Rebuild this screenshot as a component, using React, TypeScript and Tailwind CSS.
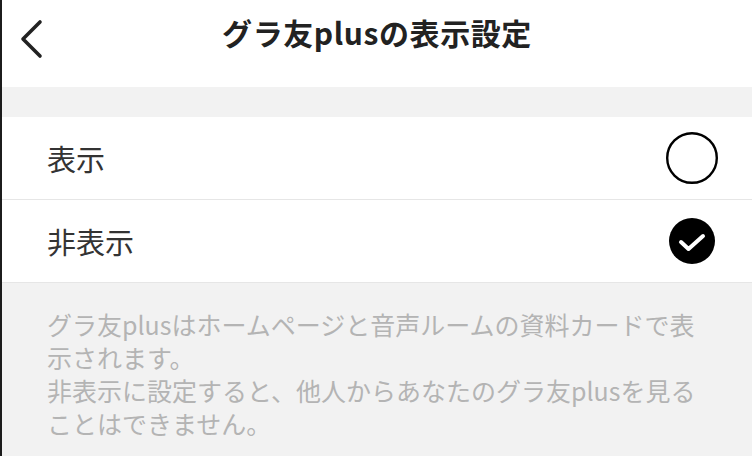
import React from "react";

const jp = { fontFamily: '"Noto Sans CJK JP", "Noto Sans", sans-serif' };

const BackIcon = () => (
  <svg width="26" height="40" viewBox="0 0 26 40" fill="none">
    <polyline points="21,3 4,20 21,37" stroke="#222" strokeWidth="3.6" strokeLinecap="round" strokeLinejoin="round" />
  </svg>
);

const Radio = ({ checked }: { checked: boolean }) =>
  checked ? (
    <svg width="46" height="46" viewBox="0 0 46 46">
      <circle cx="23" cy="23" r="23" fill="#000" />
      <polyline points="12,24 19.5,31 34,18" fill="none" stroke="#fff" strokeWidth="4" strokeLinecap="round" strokeLinejoin="round" />
    </svg>
  ) : (
    <svg width="52" height="52" viewBox="0 0 52 52">
      <circle cx="26" cy="26" r="24.8" fill="none" stroke="#000" strokeWidth="2.4" />
    </svg>
  );

const options = [
  { label: "表示", checked: false },
  { label: "非表示", checked: true },
];

export default function App() {
  return (
    <div className="w-[752px] h-[456px] overflow-hidden bg-[#f2f2f2] border-l-2 border-[#1c1c1c]" style={jp}>
      <div className="relative h-[87px] bg-white flex items-center justify-center">
        <span className="absolute left-[17px] top-[19px]">
          <BackIcon />
        </span>
        <h1 className="text-[30px] font-bold text-[#222] leading-none tracking-[0.6px] -mt-[24px]">グラ友plusの表示設定</h1>
      </div>
      <div className="h-[30px]" />
      <div className="bg-white">
        {options.map(o => (
          <div key={o.label} className="h-[83px] flex items-center justify-between pl-[45px] pr-[34px] border-b border-[#e6e6e6]">
            <span className="text-[29px] text-[#333] leading-none">{o.label}</span>
            <span className="w-[52px] flex justify-center">
              <Radio checked={o.checked} />
            </span>
          </div>
        ))}
      </div>
      <div className="pl-[45px] pt-[25px] text-[25px] leading-[33px] text-[#b4b4b4] whitespace-nowrap">
        <p>グラ友plusはホームページと音声ルームの資料カードで表</p>
        <p>示されます。</p>
        <p>非表示に設定すると、他人からあなたのグラ友plusを見る</p>
        <p>ことはできません。</p>
      </div>
    </div>
  );
}
